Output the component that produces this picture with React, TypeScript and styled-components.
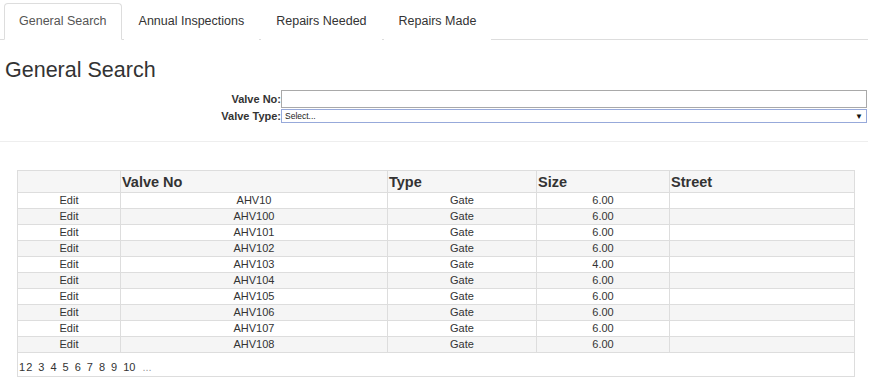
import React from "react";
import styled, { createGlobalStyle } from "styled-components";

const Global = createGlobalStyle`
  html, body { margin: 0; padding: 0; background: #fff; }
  body { font-family: "Liberation Sans", Arial, sans-serif; color: #333; }
`;

const Page = styled.div`
  width: 868px;
  padding-top: 3px;
`;

const Tabs = styled.ul`
  list-style: none;
  margin: 0;
  padding: 0 0 0 4px;
  display: flex;
  gap: 2px;
  border-bottom: 1px solid #ddd;
`;

const Tab = styled.li<{ $active?: boolean }>`
  margin-bottom: -1px;
  padding: 9px 14px 9px 14px;
  line-height: 17px;
  font-size: 12.5px;
  color: ${(p) => (p.$active ? "#555" : "#333")};
  background: #fff;
  border: 1px solid ${(p) => (p.$active ? "#ddd" : "transparent")};
  border-bottom-color: ${(p) => (p.$active ? "#fff" : "transparent")};
  border-radius: 4px 4px 0 0;
  cursor: default;
`;

const Title = styled.h3`
  margin: 18px 0 0 5px;
  font-size: 21.5px;
  line-height: 24px;
  font-weight: normal;
  color: #333;
`;

const Form = styled.div`
  margin-top: 8px;
  display: grid;
  grid-template-columns: 281px 1fr;
  row-gap: 1px;
  align-items: center;
`;

const Label = styled.label`
  text-align: right;
  font-size: 11px;
  font-weight: bold;
  color: #333;
  line-height: 13px;
`;

const TextInput = styled.div`
  height: 16px;
  border: 1px solid #a9a9a9;
  margin-right: 1px;
  background: #fff;
`;

const SelectBox = styled.div`
  height: 12px;
  border: 1px solid #97a9da;
  margin-right: 1px;
  display: flex;
  align-items: center;
  justify-content: space-between;
  padding: 0 3px 0 3px;
  font-size: 8.5px;
  color: #222;
  background: #fff;
`;

const Arrow = styled.span`
  font-size: 8px;
  color: #111;
`;

const Rule = styled.hr`
  margin: 18px 0 0 0;
  border: 0;
  border-top: 1px solid #eee;
`;

const Table = styled.table`
  margin: 28px 0 0 17px;
  width: 838px;
  table-layout: fixed;
  border-collapse: collapse;
  border: 1px solid #ddd;
`;

const HeadCell = styled.th`
  height: 19px;
  padding: 2px 1px 0 1px;
  text-align: left;
  font-size: 14.5px;
  line-height: 17px;
  font-weight: bold;
  color: #333;
  background: #f6f6f6;
  border: 1px solid #ddd;
  vertical-align: middle;
`;

const Row = styled.tr<{ $striped?: boolean }>`
  background: ${(p) => (p.$striped ? "#f5f5f5" : "#fff")};
`;

const Cell = styled.td`
  height: 15px;
  padding: 0;
  text-align: center;
  font-size: 11px;
  line-height: 15px;
  color: #333;
  border: 1px solid #ddd;
`;

const PagerCell = styled.td`
  height: 24px;
  padding: 8px 0 0 1px;
  font-size: 11px;
  color: #333;
  vertical-align: top;
  line-height: 13px;
  box-sizing: border-box;
`;

const PageLink = styled.span<{ $tight?: boolean }>`
  margin-right: ${(p) => (p.$tight ? "1px" : "6px")};
`;

const Ellipsis = styled.span`
  color: #999;
  margin-left: 1px;
`;

const rows = [
  ["AHV10", "6.00"],
  ["AHV100", "6.00"],
  ["AHV101", "6.00"],
  ["AHV102", "6.00"],
  ["AHV103", "4.00"],
  ["AHV104", "6.00"],
  ["AHV105", "6.00"],
  ["AHV106", "6.00"],
  ["AHV107", "6.00"],
  ["AHV108", "6.00"],
];

export default function App() {
  return (
    <Page>
      <Global />
      <Tabs>
        <Tab $active>General Search</Tab>
        <Tab>Annual Inspections</Tab>
        <Tab>Repairs Needed</Tab>
        <Tab>Repairs Made</Tab>
      </Tabs>
      <Title>General Search</Title>
      <Form>
        <Label>Valve No:</Label>
        <TextInput />
        <Label>Valve Type:</Label>
        <SelectBox>
          <span>Select...</span>
          <Arrow>▼</Arrow>
        </SelectBox>
      </Form>
      <Rule />
      <Table>
        <colgroup>
          <col style={{ width: 103 }} />
          <col style={{ width: 267 }} />
          <col style={{ width: 149 }} />
          <col style={{ width: 133 }} />
          <col />
        </colgroup>
        <thead>
          <tr>
            <HeadCell></HeadCell>
            <HeadCell>Valve No</HeadCell>
            <HeadCell>Type</HeadCell>
            <HeadCell>Size</HeadCell>
            <HeadCell>Street</HeadCell>
          </tr>
        </thead>
        <tbody>
          {rows.map(([no, size], i) => (
            <Row key={no} $striped={i % 2 === 1}>
              <Cell>Edit</Cell>
              <Cell>{no}</Cell>
              <Cell>Gate</Cell>
              <Cell>{size}</Cell>
              <Cell></Cell>
            </Row>
          ))}
          <tr>
            <PagerCell colSpan={5}>
              <PageLink $tight>1</PageLink>
              {["2", "3", "4", "5", "6", "7", "8", "9", "10"].map((n) => (
                <PageLink key={n}>{n}</PageLink>
              ))}
              <Ellipsis>...</Ellipsis>
            </PagerCell>
          </tr>
        </tbody>
      </Table>
    </Page>
  );
}
